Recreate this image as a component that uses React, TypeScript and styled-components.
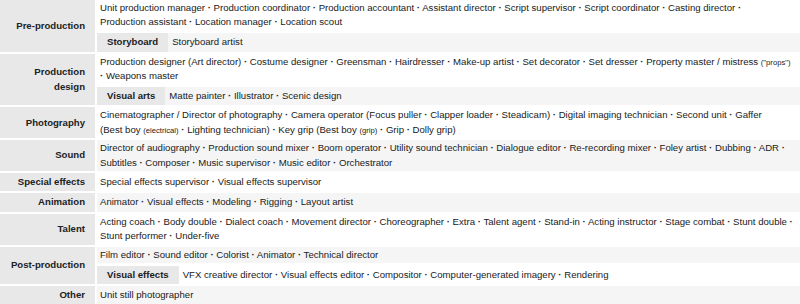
import React from "react";
import styled, { createGlobalStyle, css } from "styled-components";

const Global = createGlobalStyle`
  html, body { margin: 0; padding: 0; background: #ffffff; }
  body {
    font-family: "Liberation Sans", Arial, sans-serif;
    font-size: 9.6px;
    color: #202122;
  }
`;

const Navbox = styled.div`
  display: grid;
  grid-template-columns: 95px 1fr;
  column-gap: 2px;
  row-gap: 2px;
  width: 800px;
  line-height: 14.3px;
`;

const Group = styled.div`
  background: #e8e8e8;
  font-weight: bold;
  text-align: right;
  padding: 2.1px 10px;
  display: flex;
  align-items: center;
  justify-content: flex-end;
`;

const ListCell = styled.div<{ $shade?: boolean }>`
  display: flex;
  flex-direction: column;
  justify-content: center;
  min-width: 0;
  background: ${(p) => (p.$shade ? "#f5f5f5" : "#ffffff")};
`;

const Part = styled.div<{ $shade?: boolean }>`
  background: ${(p) => (p.$shade ? "#f5f5f5" : "transparent")};
  padding: 1.1px 2px 1.1px 3px;
`;

const SubRow = styled.div<{ $shade?: boolean }>`
  display: flex;
  margin-top: 2.5px;
  background: ${(p) => (p.$shade ? "#f5f5f5" : "#ffffff")};
`;

const SubGroup = styled.div`
  background: #e8e8e8;
  font-weight: bold;
  white-space: nowrap;
  padding: 2.05px 10px;
`;

const SubList = styled.div`
  flex: 1;
  padding: 2.05px 2px 2.05px 4px;
`;

const Li = styled.span<{ $sep?: boolean; $lead?: boolean }>`
  white-space: nowrap;
  ${(p) =>
    p.$sep &&
    css`
      &::after {
        content: " \\00B7";
        font-weight: bold;
      }
    `}
  ${(p) =>
    p.$lead &&
    css`
      &::before {
        content: "\\00B7  ";
        font-weight: bold;
      }
    `}
`;

const Small = styled.span`
  font-size: 80%;
  line-height: 1;
`;

type Tok = { t: React.ReactNode; sep?: boolean; lead?: boolean };

const Items: React.FC<{ items: (string | Tok)[]; trailing?: boolean }> = ({ items, trailing }) => (
  <>
    {items.map((it, i) => {
      const tok: Tok = typeof it === "string" ? { t: it, sep: trailing || i < items.length - 1 } : it;
      return (
        <React.Fragment key={i}>
          <Li $sep={tok.sep} $lead={tok.lead}>
            {tok.t}
          </Li>{" "}
        </React.Fragment>
      );
    })}
  </>
);

export default function App() {
  return (
    <>
      <Global />
      <Navbox>
        <Group>Pre-production</Group>
        <ListCell>
          <Part>
            <Items
              items={[
                "Unit production manager",
                "Production coordinator",
                "Production accountant",
                "Assistant director",
                "Script supervisor",
                "Script coordinator",
                "Casting director",
                "Production assistant",
                "Location manager",
                "Location scout",
              ]}
            />
          </Part>
          <SubRow $shade>
            <SubGroup>Storyboard</SubGroup>
            <SubList>
              <Items items={["Storyboard artist"]} />
            </SubList>
          </SubRow>
        </ListCell>

        <Group>Production design</Group>
        <ListCell>
          <Part>
            <Items
              trailing
              items={[
                "Production designer (Art director)",
                "Costume designer",
                "Greensman",
                "Hairdresser",
                "Make-up artist",
                "Set decorator",
                "Set dresser",
              ]}
            />
            <Items
              items={[
                { t: <>Property master / mistress <Small>("props")</Small></> },
                { t: "Weapons master", lead: true },
              ]}
            />
          </Part>
          <SubRow $shade>
            <SubGroup>Visual arts</SubGroup>
            <SubList>
              <Items items={["Matte painter", "Illustrator", "Scenic design"]} />
            </SubList>
          </SubRow>
        </ListCell>

        <Group>Photography</Group>
        <ListCell>
          <Part>
            <Items
              items={[
                { t: "Cinematographer / Director of photography", sep: true },
                { t: "Camera operator (Focus puller", sep: true },
                { t: "Clapper loader", sep: true },
                { t: "Steadicam)", sep: true },
                { t: "Digital imaging technician", sep: true },
                { t: "Second unit", sep: true },
                { t: "Gaffer" },
                { t: <>(Best boy <Small>(electrical)</Small></>, sep: true },
                { t: "Lighting technician)", sep: true },
                { t: <>Key grip (Best boy <Small>(grip)</Small></>, sep: true },
                { t: "Grip", sep: true },
                { t: "Dolly grip)" },
              ]}
            />
          </Part>
        </ListCell>

        <Group>Sound</Group>
        <ListCell $shade>
          <Part>
            <Items
              items={[
                "Director of audiography",
                "Production sound mixer",
                "Boom operator",
                "Utility sound technician",
                "Dialogue editor",
                "Re-recording mixer",
                "Foley artist",
                "Dubbing",
                "ADR",
                "Subtitles",
                "Composer",
                "Music supervisor",
                "Music editor",
                "Orchestrator",
              ]}
            />
          </Part>
        </ListCell>

        <Group>Special effects</Group>
        <ListCell>
          <Part>
            <Items items={["Special effects supervisor", "Visual effects supervisor"]} />
          </Part>
        </ListCell>

        <Group>Animation</Group>
        <ListCell $shade>
          <Part>
            <Items items={["Animator", "Visual effects", "Modeling", "Rigging", "Layout artist"]} />
          </Part>
        </ListCell>

        <Group>Talent</Group>
        <ListCell>
          <Part>
            <Items
              items={[
                "Acting coach",
                "Body double",
                "Dialect coach",
                "Movement director",
                "Choreographer",
                "Extra",
                "Talent agent",
                "Stand-in",
                "Acting instructor",
                "Stage combat",
                "Stunt double",
                "Stunt performer",
                "Under-five",
              ]}
            />
          </Part>
        </ListCell>

        <Group>Post-production</Group>
        <ListCell>
          <Part $shade>
            <Items items={["Film editor", "Sound editor", "Colorist", "Animator", "Technical director"]} />
          </Part>
          <SubRow>
            <SubGroup>Visual effects</SubGroup>
            <SubList>
              <Items
                items={[
                  "VFX creative director",
                  "Visual effects editor",
                  "Compositor",
                  "Computer-generated imagery",
                  "Rendering",
                ]}
              />
            </SubList>
          </SubRow>
        </ListCell>

        <Group>Other</Group>
        <ListCell $shade>
          <Part>
            <Items items={["Unit still photographer"]} />
          </Part>
        </ListCell>
      </Navbox>
    </>
  );
}
